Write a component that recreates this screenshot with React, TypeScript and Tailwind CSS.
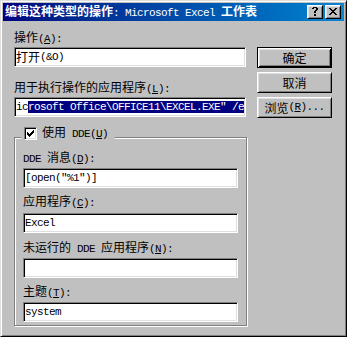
import type { ReactNode } from "react";
import clsx from "clsx";

// Half-width latin text: SimSun's latin glyphs are 6px wide at 12px
function M({ children, className }: { children: ReactNode; className?: string }) {
  return (
    <span className={clsx("font-['Liberation_Mono',monospace] text-[11px] tracking-[-0.6px]", className)}>
      {children}
    </span>
  );
}

function Key({ children }: { children: ReactNode }) {
  return <span className="underline underline-offset-[1px]">{children}</span>;
}

function PixelGlyph({ rows, x, y }: { rows: string[]; x: number; y: number }) {
  const rects: ReactNode[] = [];
  rows.forEach((row, j) => {
    row.split("").forEach((c, i) => {
      if (c === "X") rects.push(<rect key={`${i}-${j}`} x={x + i} y={y + j} width={1} height={1} />);
    });
  });
  return <>{rects}</>;
}

const HELP = [".XXXX.", "XX..XX", "....XX", "...XX.", "..XX..", "..XX..", "......", "..XX..", "..XX.."];
const CLOSE = ["XX....XX", ".XX..XX.", "..XXXX..", "...XX...", "..XXXX..", ".XX..XX.", "XX....XX"];
const CHECK = ["......X", ".....XX", "X...XXX", "XX.XXX.", "XXXXX..", ".XXX...", "..X...."];

function TitleButton({ glyph, x, y }: { glyph: string[]; x: number; y: number }) {
  return (
    <div className="relative h-[14px] w-[16px] border border-t-white border-l-white border-r-black border-b-black bg-[#c0c0c0] shadow-[inset_1px_1px_0_#dfdfdf,inset_-1px_-1px_0_#808080]">
      <svg width="16" height="14" className="absolute -left-px -top-px" shapeRendering="crispEdges" fill="#000">
        <PixelGlyph rows={glyph} x={x} y={y} />
      </svg>
    </div>
  );
}

function Label({ children, className }: { children: ReactNode; className?: string }) {
  return <div className={clsx("h-[16px] leading-[16px] whitespace-nowrap", className)}>{children}</div>;
}

function Field({ children, className }: { children?: ReactNode; className?: string }) {
  return (
    <div
      className={clsx(
        "flex h-[20px] items-center overflow-hidden whitespace-nowrap border border-t-[#808080] border-l-[#808080] border-r-white border-b-white bg-white pl-[1px] text-black shadow-[inset_1px_1px_0_#000,inset_-1px_-1px_0_#dfdfdf]",
        className
      )}
    >
      {children}
    </div>
  );
}

function Button({ children, primary }: { children: ReactNode; primary?: boolean }) {
  return (
    <div
      className={clsx(
        "flex h-[21px] w-[75px] items-center justify-center border",
        primary
          ? "border-black shadow-[inset_1px_1px_0_#fff,inset_-1px_-1px_0_#000,inset_2px_2px_0_#dfdfdf,inset_-2px_-2px_0_#808080]"
          : "border-t-white border-l-white border-r-black border-b-black shadow-[inset_1px_1px_0_#dfdfdf,inset_-1px_-1px_0_#808080]"
      )}
    >
      {children}
    </div>
  );
}

export default function App() {
  return (
    <div className="flex h-[337px] w-[347px] flex-col border border-t-[#dfdfdf] border-l-[#dfdfdf] border-r-black border-b-black bg-[#c0c0c0] p-[2px] font-['Noto_Sans_CJK_SC',sans-serif] text-[12px] text-black shadow-[inset_1px_1px_0_#fff,inset_-1px_-1px_0_#808080]">
      {/* Title bar */}
      <div className="flex h-[18px] shrink-0 items-center bg-linear-to-r from-[#000080] to-[#1084d0] pl-[2px] pr-[3px]">
        <span className="flex-1 whitespace-nowrap font-bold text-white">
          编辑这种类型的操作<M className="font-normal">: Microsoft Excel </M>工作表
        </span>
        <TitleButton glyph={HELP} x={5} y={2} />
        <div className="w-[2px]" />
        <TitleButton glyph={CLOSE} x={4} y={3} />
      </div>

      {/* Body */}
      <div className="flex pl-[11px]">
        <div className="w-[233px] pt-[8px]">
          <Label>
            操作<M>(<Key>A</Key>):</M>
          </Label>
          <Field className="mt-[2px] w-[232px]">
            打开<M>(&amp;O)</M>
          </Field>

          <Label className="mt-[12px]">
            用于执行操作的应用程序<M>(<Key>L</Key>):</M>
          </Label>
          <Field className="mt-[2px] w-[232px]">
            <M>
              ic
              <span className="bg-[#000080] text-white">rosoft Office\OFFICE11\EXCEL.EXE" /e</span>
            </M>
          </Field>

          {/* DDE group */}
          <div className="relative mt-[20px] w-[233px] border border-[#808080] px-[8px] pb-[3px] shadow-[inset_1px_1px_0_#fff,1px_1px_0_#fff]">
            <div className="absolute left-[6px] top-[-13px] flex h-[16px] items-center gap-[5px] bg-[#c0c0c0] pl-[3px] pr-[7px]">
              <div className="h-[13px] w-[13px] border border-t-[#808080] border-l-[#808080] border-r-white border-b-white bg-white shadow-[inset_1px_1px_0_#000,inset_-1px_-1px_0_#dfdfdf]">
                <svg width="11" height="11" shapeRendering="crispEdges" fill="#000">
                  <PixelGlyph rows={CHECK} x={2} y={2} />
                </svg>
              </div>
              <span className="whitespace-nowrap leading-[16px]">
                使用<M> DDE(<Key>U</Key>)</M>
              </span>
            </div>

            <Label className="mt-[11px]">
              <M>DDE </M>消息<M>(<Key>D</Key>):</M>
            </Label>
            <Field className="mt-[3px] w-[215px]">
              <M>[open("%1")]</M>
            </Field>

            <Label className="mt-[5px]">
              应用程序<M>(<Key>C</Key>):</M>
            </Label>
            <Field className="mt-[4px] w-[215px]">
              <M>Excel</M>
            </Field>

            <Label className="mt-[6px]">
              未运行的<M> DDE </M>应用程序<M>(<Key>N</Key>):</M>
            </Label>
            <Field className="mt-[3px] w-[215px]" />

            <Label className="mt-[5px]">
              主题<M>(<Key>T</Key>):</M>
            </Label>
            <Field className="mt-[3px] w-[215px]">
              <M>system</M>
            </Field>
          </div>
        </div>

        {/* Buttons */}
        <div className="ml-[10px] flex flex-col gap-[4px] pt-[26px]">
          <Button primary>确定</Button>
          <Button>取消</Button>
          <Button>
            浏览<M>(<Key>R</Key>)...</M>
          </Button>
        </div>
      </div>
    </div>
  );
}
